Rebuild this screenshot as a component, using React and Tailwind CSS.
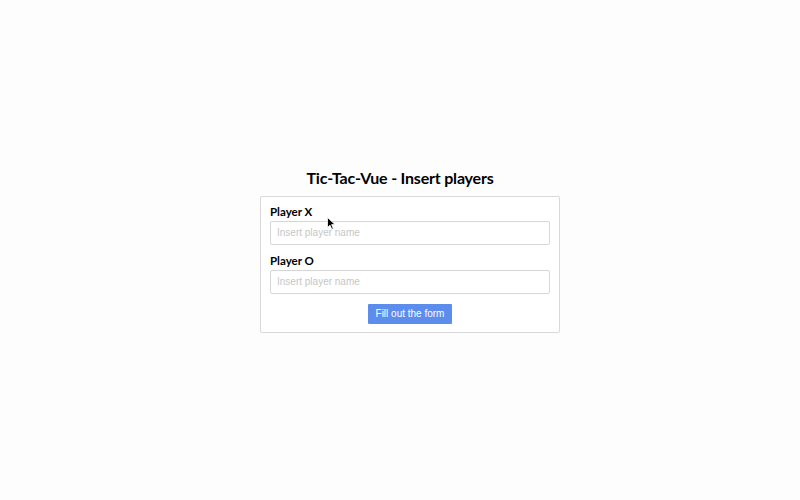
import React from 'react';

function PlayerField({ label }) {
    return (
        <div className="flex flex-col">
            <label className="font-bold text-[11.5px] leading-[14px] text-black mb-[2px]">{label}</label>
            <input
                type="text"
                placeholder="Insert player name"
                className="h-[24px] w-full border border-[#d6d6d6] rounded-[2px] px-[6px] text-[10px] text-black placeholder:text-[#c6c6c6] outline-none bg-white"
                style={{ fontFamily: '"Liberation Sans", Arial, sans-serif' }}
            />
        </div>
    );
}

export default function App() {
    return (
        <div
            className="relative h-[500px] w-full flex items-center justify-center bg-[#fefdfe]"
            style={{ fontFamily: 'Lato, "Noto Sans", sans-serif' }}
        >
            <div className="flex flex-col items-center">
                <h1 className="font-bold text-[16px] leading-[20px] text-black mb-[8px] tracking-[-0.2px]">
                    Tic-Tac-Vue - Insert players
                </h1>
                <div className="ml-[20px] w-[300px] border border-[#d9d9d9] rounded-[2px] bg-white px-[9px] pt-[8px] pb-[8px] flex flex-col gap-[9px]">
                    <PlayerField label="Player X" />
                    <PlayerField label="Player O" />
                    <div className="flex justify-center pt-[1px]">
                        <button
                            className="h-[20px] px-[8px] bg-[#5c8cec] text-white text-[10px] rounded-[1px]"
                            style={{ fontFamily: '"Liberation Sans", Arial, sans-serif' }}
                        >
                            Fill out the form
                        </button>
                    </div>
                </div>
            </div>
            <svg className="absolute left-[327px] top-[217px]" width="9" height="13" viewBox="0 0 9 13">
                <path d="M0.5 0.5 L0.5 10.5 L3 8.2 L4.8 12.3 L6.3 11.6 L4.6 7.6 L8 7.6 Z" fill="#000" stroke="#fff" strokeWidth="0.8" />
            </svg>
        </div>
    );
}
